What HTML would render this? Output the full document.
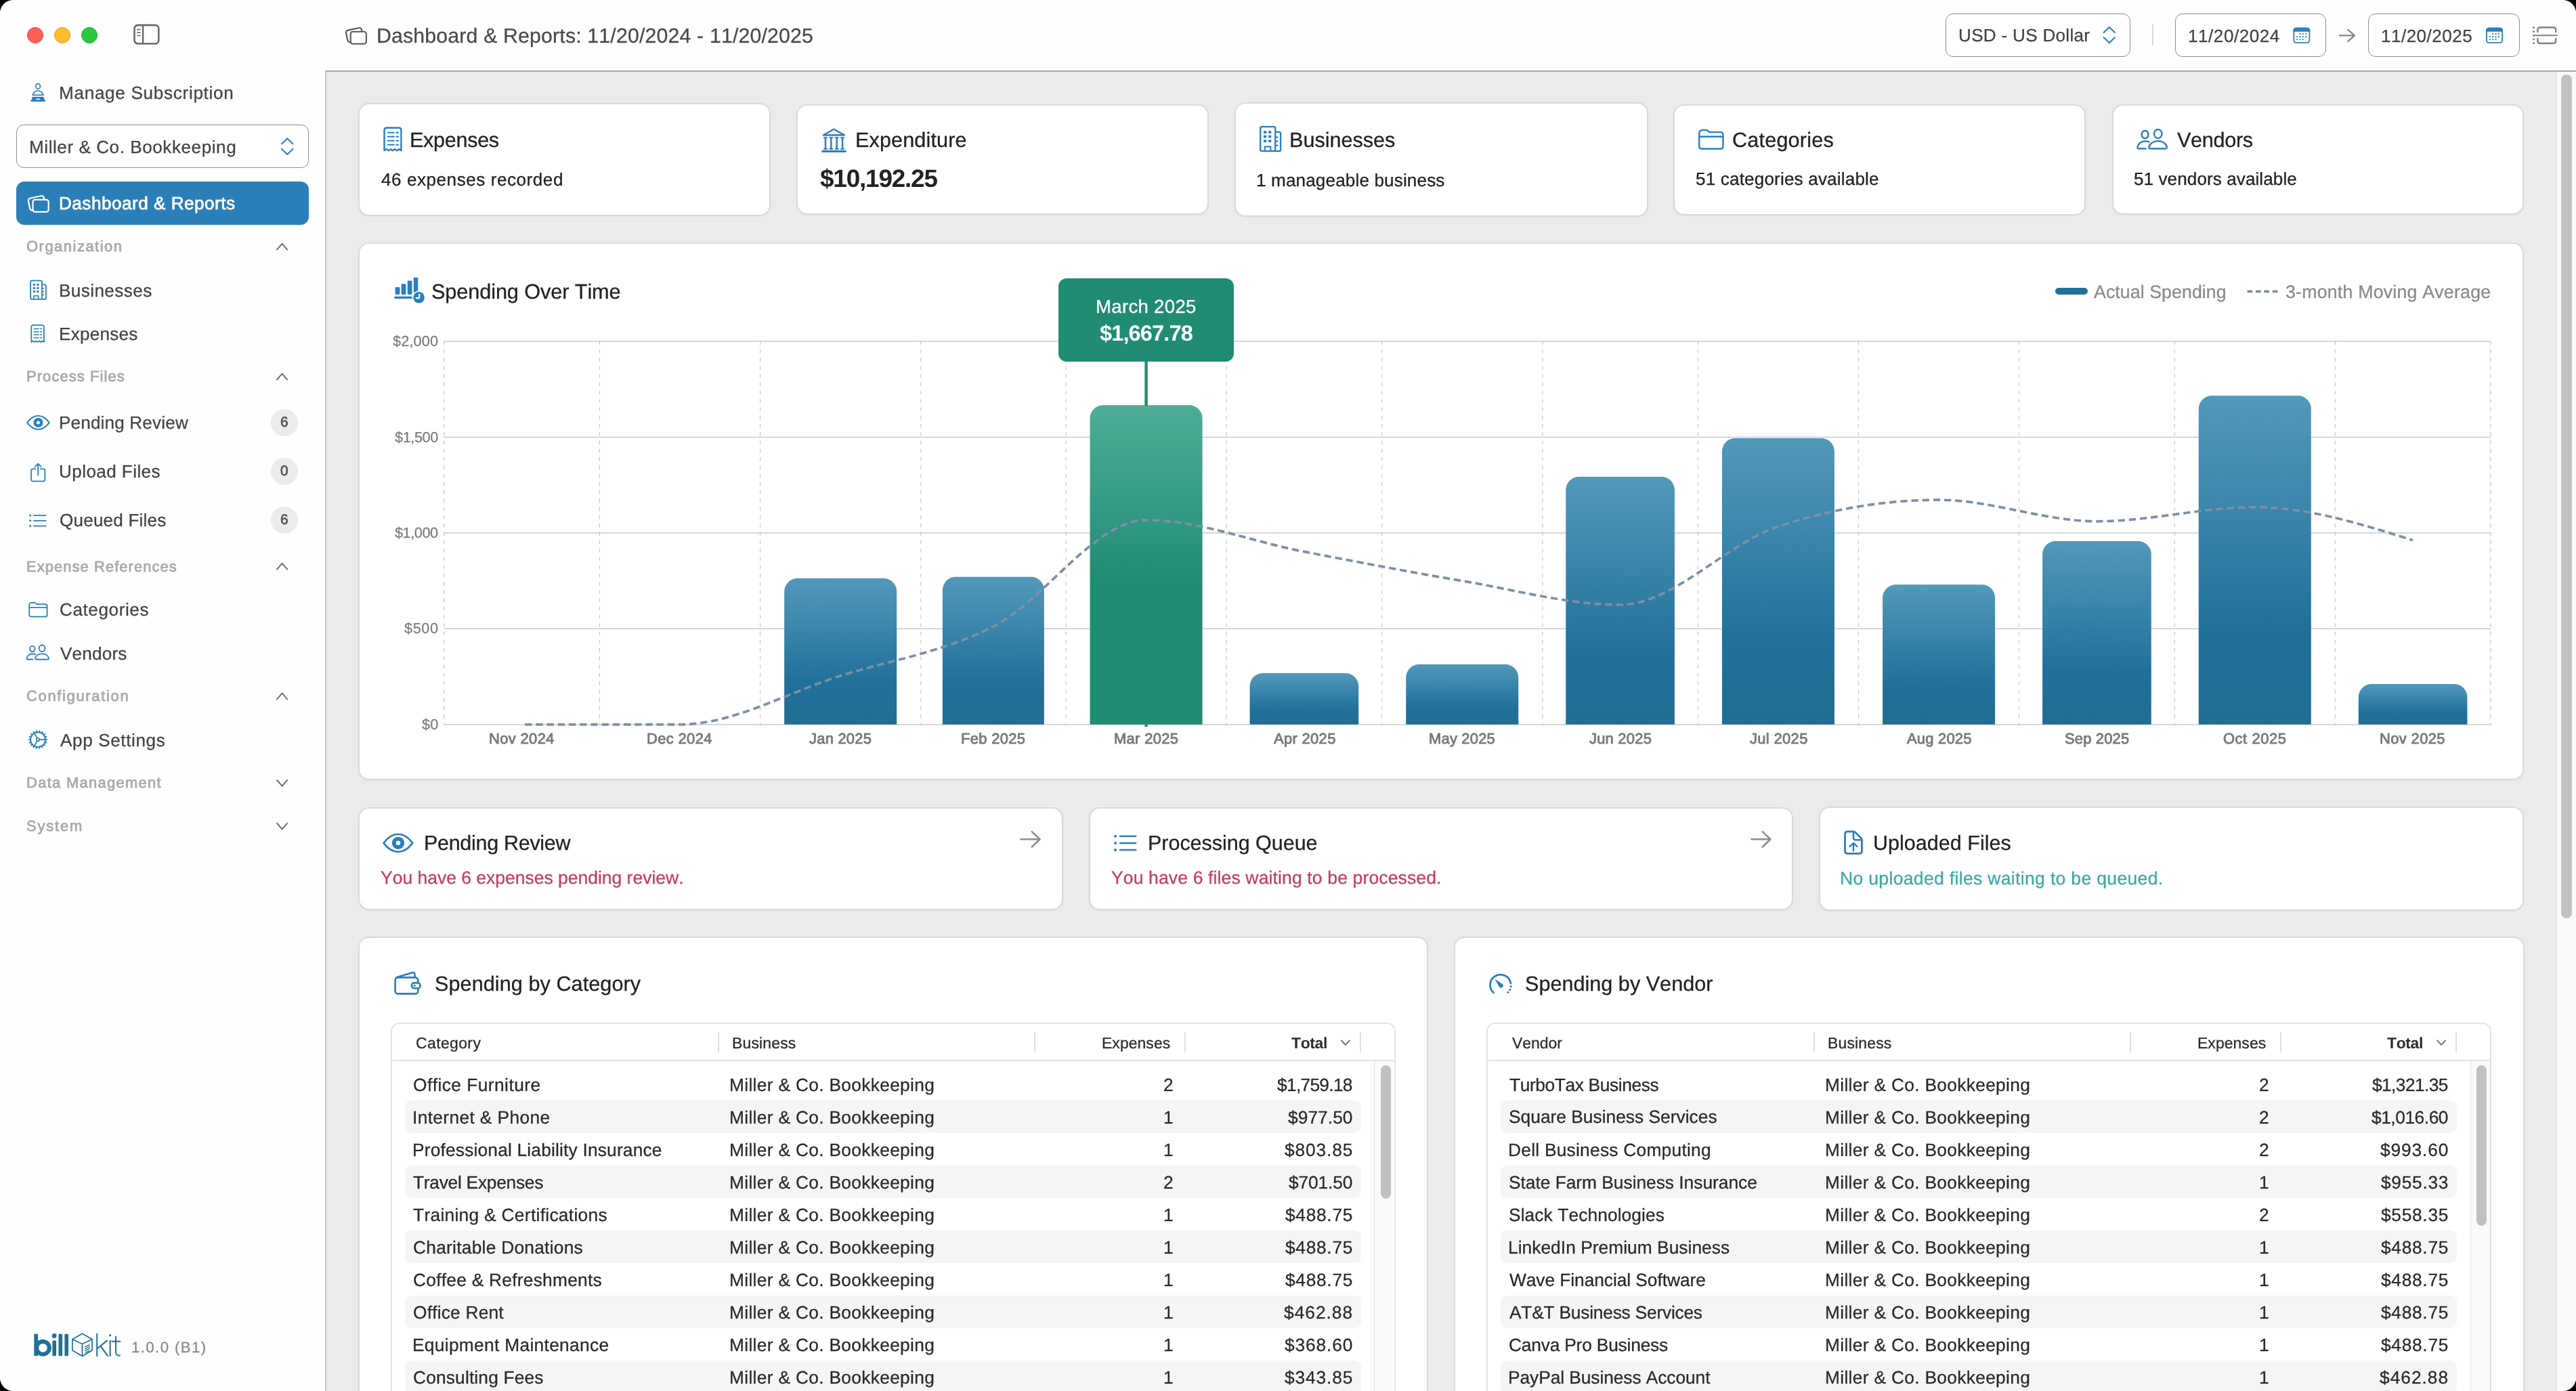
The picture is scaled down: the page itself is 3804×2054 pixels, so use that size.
<!DOCTYPE html>
<html><head><meta charset="utf-8"><title>Dashboard &amp; Reports</title><style>
html,body{margin:0;padding:0;background:#000;}
body{width:3804px;height:2054px;overflow:hidden;position:relative;font-family:"Liberation Sans",sans-serif;}
#win{position:absolute;left:0;top:0;width:3804px;height:2054px;border-radius:20px;overflow:hidden;background:#fefefe;}
.b{position:absolute;}
.t{position:absolute;white-space:nowrap;font-kerning:none;will-change:transform;text-rendering:geometricPrecision;font-family:"Liberation Sans",sans-serif;}
svg.ov{position:absolute;left:0;top:0;}
</style></head><body><div id="win">
<div class="b" style="left:0.00px;top:0.00px;width:480.00px;height:2054.00px;background:#fefefe;"></div>
<div class="b" style="left:480.00px;top:0.00px;width:3324.00px;height:104.00px;background:#fefefe;"></div>
<div class="b" style="left:480.00px;top:104.00px;width:3324.00px;height:1950.00px;background:#ebebeb;border-top:2px solid #a9a9a9;border-left:2px solid #c4c4c4;box-sizing:border-box;"></div>
<div class="b" style="left:3775.00px;top:106.00px;width:29.00px;height:1948.00px;background:#fafafa;border-left:1.5px solid #e6e6e6;box-sizing:border-box;"></div>
<div class="b" style="left:3782.00px;top:110.00px;width:16.00px;height:1246.00px;background:#c1c1c1;border-radius:8px;"></div>
<div class="b" style="left:40.00px;top:40.00px;width:24.00px;height:24.00px;background:#fe5f57;border-radius:50%;border:1px solid #e2463f;box-sizing:border-box;"></div>
<div class="b" style="left:79.80px;top:40.00px;width:24.00px;height:24.00px;background:#febc2e;border-radius:50%;border:1px solid #dfa123;box-sizing:border-box;"></div>
<div class="b" style="left:120.00px;top:40.00px;width:24.00px;height:24.00px;background:#28c840;border-radius:50%;border:1px solid #1dad2b;box-sizing:border-box;"></div>
<div class="t" style="left:555.81px;top:39.35px;font-size:30.30px;line-height:30.30px;color:#4a4a4a;-webkit-text-stroke:0.28px #4a4a4a;letter-spacing:0.152px;">Dashboard &amp; Reports: 11/20/2024 - 11/20/2025</div>
<div class="b" style="left:2872.60px;top:19.60px;width:273.60px;height:64.60px;background:#fff;border:1.8px solid #8f8f8f;border-radius:11px;box-sizing:border-box;"></div>
<div class="t" style="left:2892.18px;top:38.59px;font-size:26.12px;line-height:26.12px;color:#444;-webkit-text-stroke:0.28px #444;letter-spacing:0.285px;">USD - US Dollar</div>
<div class="b" style="left:3178.30px;top:36.30px;width:1.60px;height:31.20px;background:#d8d8d8;"></div>
<div class="b" style="left:3211.50px;top:19.60px;width:223.40px;height:64.60px;background:#fff;border:1.8px solid #8f8f8f;border-radius:11px;box-sizing:border-box;"></div>
<div class="t" style="left:3230.71px;top:39.59px;font-size:26.12px;line-height:26.12px;color:#444;-webkit-text-stroke:0.28px #444;letter-spacing:0.523px;">11/20/2024</div>
<div class="b" style="left:3496.80px;top:19.60px;width:223.90px;height:64.60px;background:#fff;border:1.8px solid #8f8f8f;border-radius:11px;box-sizing:border-box;"></div>
<div class="t" style="left:3516.01px;top:39.59px;font-size:26.12px;line-height:26.12px;color:#444;-webkit-text-stroke:0.28px #444;letter-spacing:0.448px;">11/20/2025</div>
<div class="t" style="left:87.16px;top:124.09px;font-size:26.12px;line-height:26.12px;color:#444;-webkit-text-stroke:0.28px #444;letter-spacing:0.695px;">Manage Subscription</div>
<div class="b" style="left:24.00px;top:184.00px;width:432.20px;height:64.20px;background:#fff;border:1.8px solid #8f8f8f;border-radius:11px;box-sizing:border-box;"></div>
<div class="t" style="left:42.86px;top:204.09px;font-size:26.12px;line-height:26.12px;color:#444;-webkit-text-stroke:0.28px #444;letter-spacing:0.544px;">Miller &amp; Co. Bookkeeping</div>
<div class="b" style="left:24.00px;top:268.30px;width:431.70px;height:63.40px;background:#2a7fb9;border-radius:12px;"></div>
<div class="t" style="left:87.16px;top:286.99px;font-size:26.12px;line-height:26.12px;color:#fff;-webkit-text-stroke:0.75px #fff;letter-spacing:0.498px;">Dashboard &amp; Reports</div>
<div class="t" style="left:39.36px;top:352.62px;font-size:21.95px;line-height:21.95px;color:#a9a9a9;-webkit-text-stroke:0.8px #a9a9a9;letter-spacing:1.513px;">Organization</div>
<div class="t" style="left:87.16px;top:416.39px;font-size:26.12px;line-height:26.12px;color:#444;-webkit-text-stroke:0.28px #444;letter-spacing:0.410px;">Businesses</div>
<div class="t" style="left:87.16px;top:479.99px;font-size:26.12px;line-height:26.12px;color:#444;-webkit-text-stroke:0.28px #444;letter-spacing:0.251px;">Expenses</div>
<div class="t" style="left:38.60px;top:544.62px;font-size:21.95px;line-height:21.95px;color:#a9a9a9;-webkit-text-stroke:0.8px #a9a9a9;letter-spacing:1.083px;">Process Files</div>
<div class="t" style="left:87.16px;top:611.19px;font-size:26.12px;line-height:26.12px;color:#444;-webkit-text-stroke:0.28px #444;letter-spacing:0.160px;">Pending Review</div>
<div class="t" style="left:87.28px;top:682.89px;font-size:26.12px;line-height:26.12px;color:#444;-webkit-text-stroke:0.28px #444;letter-spacing:0.405px;">Upload Files</div>
<div class="t" style="left:88.06px;top:755.39px;font-size:26.12px;line-height:26.12px;color:#444;-webkit-text-stroke:0.28px #444;letter-spacing:0.181px;">Queued Files</div>
<div class="b" style="left:400.00px;top:604.30px;width:40.00px;height:40.00px;background:#ebebeb;border-radius:50%;"></div>
<div class="t" style="left:414.12px;top:613.91px;font-size:20.90px;line-height:20.90px;color:#555;-webkit-text-stroke:0.7px #555;">6</div>
<div class="b" style="left:400.00px;top:675.90px;width:40.00px;height:40.00px;background:#ebebeb;border-radius:50%;"></div>
<div class="t" style="left:414.19px;top:685.51px;font-size:20.90px;line-height:20.90px;color:#555;-webkit-text-stroke:0.7px #555;">0</div>
<div class="b" style="left:400.00px;top:748.10px;width:40.00px;height:40.00px;background:#ebebeb;border-radius:50%;"></div>
<div class="t" style="left:414.12px;top:757.71px;font-size:20.90px;line-height:20.90px;color:#555;-webkit-text-stroke:0.7px #555;">6</div>
<div class="t" style="left:38.60px;top:825.92px;font-size:21.95px;line-height:21.95px;color:#a9a9a9;-webkit-text-stroke:0.8px #a9a9a9;letter-spacing:1.063px;">Expense References</div>
<div class="t" style="left:87.97px;top:887.39px;font-size:26.12px;line-height:26.12px;color:#444;-webkit-text-stroke:0.28px #444;letter-spacing:0.581px;">Categories</div>
<div class="t" style="left:89.19px;top:951.59px;font-size:26.12px;line-height:26.12px;color:#444;-webkit-text-stroke:0.28px #444;letter-spacing:0.176px;">Vendors</div>
<div class="t" style="left:39.29px;top:1017.42px;font-size:21.95px;line-height:21.95px;color:#a9a9a9;-webkit-text-stroke:0.8px #a9a9a9;letter-spacing:1.675px;">Configuration</div>
<div class="t" style="left:89.25px;top:1079.79px;font-size:26.12px;line-height:26.12px;color:#444;-webkit-text-stroke:0.28px #444;letter-spacing:0.614px;">App Settings</div>
<div class="t" style="left:38.60px;top:1144.62px;font-size:21.95px;line-height:21.95px;color:#a9a9a9;-webkit-text-stroke:0.8px #a9a9a9;letter-spacing:1.301px;">Data Management</div>
<div class="t" style="left:39.40px;top:1209.02px;font-size:21.95px;line-height:21.95px;color:#a9a9a9;-webkit-text-stroke:0.8px #a9a9a9;letter-spacing:1.816px;">System</div>
<div class="t" style="left:193.70px;top:1978.56px;font-size:22.26px;line-height:22.26px;color:#8a8a8a;-webkit-text-stroke:0.28px #8a8a8a;letter-spacing:1.382px;">1.0.0 (B1)</div>
<div class="b" style="left:529.30px;top:151.60px;width:608.90px;height:167.20px;background:#fff;border:2px solid #dadada;border-radius:16px;box-sizing:border-box;box-shadow:0 1px 2px rgba(0,0,0,0.04);"></div>
<div class="t" style="left:605.39px;top:192.08px;font-size:30.62px;line-height:30.62px;color:#222;-webkit-text-stroke:0.28px #222;letter-spacing:-0.321px;">Expenses</div>
<div class="t" style="left:562.80px;top:251.59px;font-size:26.12px;line-height:26.12px;color:#222;-webkit-text-stroke:0.28px #222;letter-spacing:0.530px;">46 expenses recorded</div>
<div class="b" style="left:1176.00px;top:153.70px;width:609.30px;height:163.10px;background:#fff;border:2px solid #dadada;border-radius:16px;box-sizing:border-box;box-shadow:0 1px 2px rgba(0,0,0,0.04);"></div>
<div class="t" style="left:1262.69px;top:192.38px;font-size:30.62px;line-height:30.62px;color:#222;-webkit-text-stroke:0.28px #222;letter-spacing:0.116px;">Expenditure</div>
<div class="t" style="left:1210.51px;top:245.97px;font-size:36.89px;line-height:36.89px;color:#222;font-weight:700;letter-spacing:-1.179px;">$10,192.25</div>
<div class="b" style="left:1823.00px;top:150.60px;width:610.50px;height:169.60px;background:#fff;border:2px solid #dadada;border-radius:16px;box-sizing:border-box;box-shadow:0 1px 2px rgba(0,0,0,0.04);"></div>
<div class="t" style="left:1903.69px;top:192.08px;font-size:30.62px;line-height:30.62px;color:#222;-webkit-text-stroke:0.28px #222;letter-spacing:-0.029px;">Businesses</div>
<div class="t" style="left:1855.01px;top:253.09px;font-size:26.12px;line-height:26.12px;color:#222;-webkit-text-stroke:0.28px #222;letter-spacing:0.129px;">1 manageable business</div>
<div class="b" style="left:2471.00px;top:153.70px;width:609.00px;height:164.10px;background:#fff;border:2px solid #dadada;border-radius:16px;box-sizing:border-box;box-shadow:0 1px 2px rgba(0,0,0,0.04);"></div>
<div class="t" style="left:2557.65px;top:192.08px;font-size:30.62px;line-height:30.62px;color:#222;-webkit-text-stroke:0.28px #222;letter-spacing:0.188px;">Categories</div>
<div class="t" style="left:2504.25px;top:251.29px;font-size:26.12px;line-height:26.12px;color:#222;-webkit-text-stroke:0.28px #222;letter-spacing:0.158px;">51 categories available</div>
<div class="b" style="left:3118.50px;top:154.10px;width:608.30px;height:163.40px;background:#fff;border:2px solid #dadada;border-radius:16px;box-sizing:border-box;box-shadow:0 1px 2px rgba(0,0,0,0.04);"></div>
<div class="t" style="left:3214.97px;top:192.08px;font-size:30.62px;line-height:30.62px;color:#222;-webkit-text-stroke:0.28px #222;letter-spacing:-0.317px;">Vendors</div>
<div class="t" style="left:3150.75px;top:251.29px;font-size:26.12px;line-height:26.12px;color:#222;-webkit-text-stroke:0.28px #222;letter-spacing:0.067px;">51 vendors available</div>
<div class="b" style="left:529.40px;top:358.40px;width:3197.40px;height:793.60px;background:#fff;border:2px solid #dadada;border-radius:16px;box-sizing:border-box;box-shadow:0 1px 2px rgba(0,0,0,0.04);"></div>
<div class="t" style="left:636.90px;top:415.59px;font-size:30.72px;line-height:30.72px;color:#222;-webkit-text-stroke:0.28px #222;letter-spacing:-0.123px;">Spending Over Time</div>
<div class="b" style="left:3034.90px;top:425.30px;width:47.80px;height:10.00px;background:#20709a;border-radius:5px;"></div>
<div class="t" style="left:3092.35px;top:418.15px;font-size:26.75px;line-height:26.75px;color:#8a8a8a;-webkit-text-stroke:0.28px #8a8a8a;letter-spacing:0.060px;">Actual Spending</div>
<div class="t" style="left:3374.98px;top:418.15px;font-size:26.75px;line-height:26.75px;color:#8a8a8a;-webkit-text-stroke:0.28px #8a8a8a;letter-spacing:0.201px;">3-month Moving Average</div>
<div class="t" style="left:622.57px;top:1059.00px;font-size:21.74px;line-height:21.74px;color:#7c7c7c;-webkit-text-stroke:0.28px #7c7c7c;letter-spacing:0.105px;">$0</div>
<div class="t" style="left:596.77px;top:917.40px;font-size:21.74px;line-height:21.74px;color:#7c7c7c;-webkit-text-stroke:0.28px #7c7c7c;letter-spacing:0.576px;">$500</div>
<div class="t" style="left:582.77px;top:775.80px;font-size:21.74px;line-height:21.74px;color:#7c7c7c;-webkit-text-stroke:0.28px #7c7c7c;letter-spacing:-0.480px;">$1,000</div>
<div class="t" style="left:582.57px;top:635.20px;font-size:21.74px;line-height:21.74px;color:#7c7c7c;-webkit-text-stroke:0.28px #7c7c7c;letter-spacing:-0.440px;">$1,500</div>
<div class="t" style="left:579.77px;top:492.60px;font-size:21.74px;line-height:21.74px;color:#7c7c7c;-webkit-text-stroke:0.28px #7c7c7c;letter-spacing:0.120px;">$2,000</div>
<div class="t" style="left:721.86px;top:1080.32px;font-size:21.95px;line-height:21.95px;color:#7a7a7a;-webkit-text-stroke:0.9px #7a7a7a;letter-spacing:0.357px;">Nov 2024</div>
<div class="t" style="left:955.20px;top:1080.32px;font-size:21.95px;line-height:21.95px;color:#7a7a7a;-webkit-text-stroke:0.9px #7a7a7a;letter-spacing:0.357px;">Dec 2024</div>
<div class="t" style="left:1195.48px;top:1080.32px;font-size:21.95px;line-height:21.95px;color:#7a7a7a;-webkit-text-stroke:0.9px #7a7a7a;letter-spacing:0.238px;">Jan 2025</div>
<div class="t" style="left:1418.96px;top:1080.32px;font-size:21.95px;line-height:21.95px;color:#7a7a7a;-webkit-text-stroke:0.9px #7a7a7a;letter-spacing:0.313px;">Feb 2025</div>
<div class="t" style="left:1644.66px;top:1080.32px;font-size:21.95px;line-height:21.95px;color:#7a7a7a;-webkit-text-stroke:0.9px #7a7a7a;letter-spacing:0.316px;">Mar 2025</div>
<div class="t" style="left:1880.66px;top:1080.32px;font-size:21.95px;line-height:21.95px;color:#7a7a7a;-webkit-text-stroke:0.9px #7a7a7a;letter-spacing:0.328px;">Apr 2025</div>
<div class="t" style="left:2109.89px;top:1080.32px;font-size:21.95px;line-height:21.95px;color:#7a7a7a;-webkit-text-stroke:0.9px #7a7a7a;letter-spacing:0.207px;">May 2025</div>
<div class="t" style="left:2346.94px;top:1080.32px;font-size:21.95px;line-height:21.95px;color:#7a7a7a;-webkit-text-stroke:0.9px #7a7a7a;letter-spacing:0.224px;">Jun 2025</div>
<div class="t" style="left:2583.54px;top:1080.32px;font-size:21.95px;line-height:21.95px;color:#7a7a7a;-webkit-text-stroke:0.9px #7a7a7a;letter-spacing:0.342px;">Jul 2025</div>
<div class="t" style="left:2815.81px;top:1080.32px;font-size:21.95px;line-height:21.95px;color:#7a7a7a;-webkit-text-stroke:0.9px #7a7a7a;letter-spacing:0.215px;">Aug 2025</div>
<div class="t" style="left:3048.84px;top:1080.32px;font-size:21.95px;line-height:21.95px;color:#7a7a7a;-webkit-text-stroke:0.9px #7a7a7a;letter-spacing:0.165px;">Sep 2025</div>
<div class="t" style="left:3283.30px;top:1080.32px;font-size:21.95px;line-height:21.95px;color:#7a7a7a;-webkit-text-stroke:0.9px #7a7a7a;letter-spacing:0.544px;">Oct 2025</div>
<div class="t" style="left:3514.43px;top:1080.32px;font-size:21.95px;line-height:21.95px;color:#7a7a7a;-webkit-text-stroke:0.9px #7a7a7a;letter-spacing:0.369px;">Nov 2025</div>
<svg class="ov" width="3804" height="2054" viewBox="0 0 3804 2054" xmlns="http://www.w3.org/2000/svg"><g transform="translate(197 36)"><rect x="1.5" y="1.1" width="35.8" height="27.4" rx="5" fill="none" stroke="#6a6a6a" stroke-width="2.6"/><path d="M14.1 1.2 V28.4" stroke="#6a6a6a" stroke-width="2.4"/><path d="M5.9 7.6 H9.9 M5.9 12.1 H9.9 M5.9 16.5 H9.9" stroke="#6a6a6a" stroke-width="1.7" stroke-linecap="round"/></g><g transform="translate(509.60 39.40) scale(1.0000)" fill="none" stroke="#555" stroke-linecap="round" stroke-linejoin="round" ><rect x="2.40" y="3.30" width="23.4" height="18.2" rx="3.4" stroke-width="2.1" transform="rotate(-12 14.1 12.4)"/><rect x="8.1" y="7.4" width="23.2" height="18" rx="3.4" stroke-width="2.1" fill="#fefefe"/></g><path d="M3106.6000000000004 48 L3114.8 40 L3123.0 48 M3106.6000000000004 55.3 L3114.8 63.3 L3123.0 55.3" fill="none" stroke="#2a7fbd" stroke-width="2.1" stroke-linecap="round" stroke-linejoin="round"/><g transform="translate(3386.4 40.7)"><rect x="0.9" y="0.9" width="23.1" height="21.5" rx="3.6" fill="#fff" stroke="#2a7fbd" stroke-width="1.8"/><path d="M0.9 5.4 V4.5 Q0.9 0.9 4.5 0.9 H20.4 Q24 0.9 24 4.5 V5.4 Q21.9 5.2 19.8 5.2 H5.1 Q3 5.2 0.9 5.4 Z" fill="#2a7fbd" stroke="#2a7fbd" stroke-width="1.8" stroke-linejoin="round"/><rect x="9.10" y="8.30" width="2" height="2" rx="0.4" fill="#2a7fbd"/><rect x="13.40" y="8.30" width="2" height="2" rx="0.4" fill="#2a7fbd"/><rect x="17.70" y="8.30" width="2" height="2" rx="0.4" fill="#2a7fbd"/><rect x="4.80" y="12.45" width="2" height="2" rx="0.4" fill="#2a7fbd"/><rect x="9.10" y="12.45" width="2" height="2" rx="0.4" fill="#2a7fbd"/><rect x="13.40" y="12.45" width="2" height="2" rx="0.4" fill="#2a7fbd"/><rect x="17.70" y="12.45" width="2" height="2" rx="0.4" fill="#2a7fbd"/><rect x="4.80" y="16.60" width="2" height="2" rx="0.4" fill="#2a7fbd"/><rect x="9.10" y="16.60" width="2" height="2" rx="0.4" fill="#2a7fbd"/><rect x="13.40" y="16.60" width="2" height="2" rx="0.4" fill="#2a7fbd"/></g><path d="M3455 52.4 H3477 M3467.2 43.7 L3477 52.4 L3467.2 61.099999999999994" fill="none" stroke="#858585" stroke-width="2.2" stroke-linecap="round" stroke-linejoin="round"/><g transform="translate(3671.1 40.7)"><rect x="0.9" y="0.9" width="23.1" height="21.5" rx="3.6" fill="#fff" stroke="#2a7fbd" stroke-width="1.8"/><path d="M0.9 5.4 V4.5 Q0.9 0.9 4.5 0.9 H20.4 Q24 0.9 24 4.5 V5.4 Q21.9 5.2 19.8 5.2 H5.1 Q3 5.2 0.9 5.4 Z" fill="#2a7fbd" stroke="#2a7fbd" stroke-width="1.8" stroke-linejoin="round"/><rect x="9.10" y="8.30" width="2" height="2" rx="0.4" fill="#2a7fbd"/><rect x="13.40" y="8.30" width="2" height="2" rx="0.4" fill="#2a7fbd"/><rect x="17.70" y="8.30" width="2" height="2" rx="0.4" fill="#2a7fbd"/><rect x="4.80" y="12.45" width="2" height="2" rx="0.4" fill="#2a7fbd"/><rect x="9.10" y="12.45" width="2" height="2" rx="0.4" fill="#2a7fbd"/><rect x="13.40" y="12.45" width="2" height="2" rx="0.4" fill="#2a7fbd"/><rect x="17.70" y="12.45" width="2" height="2" rx="0.4" fill="#2a7fbd"/><rect x="4.80" y="16.60" width="2" height="2" rx="0.4" fill="#2a7fbd"/><rect x="9.10" y="16.60" width="2" height="2" rx="0.4" fill="#2a7fbd"/><rect x="13.40" y="16.60" width="2" height="2" rx="0.4" fill="#2a7fbd"/></g><g transform="translate(3740 39)"><circle cx="1.6" cy="1.6" r="1.5" fill="#808080"/><circle cx="1.6" cy="7.4" r="1.5" fill="#808080"/><circle cx="1.6" cy="13.2" r="1.5" fill="#808080"/><circle cx="1.6" cy="19" r="1.5" fill="#808080"/><circle cx="1.6" cy="24.8" r="1.5" fill="#808080"/><path d="M7.4 9 V5 Q7.4 1.5 10.9 1.5 H30.7 Q34.2 1.5 34.2 5 V9 M7.4 17 V21.5 Q7.4 25 10.9 25 H30.7 Q34.2 25 34.2 21.5 V17" fill="none" stroke="#808080" stroke-width="2.3" stroke-linecap="butt"/><path d="M1.6 13.2 H35.8" stroke="#808080" stroke-width="2" stroke-linecap="round"/></g><g transform="translate(45.10 123.00) scale(1.0000)" fill="none" stroke="#2a7fbd" stroke-linecap="round" stroke-linejoin="round" ><ellipse cx="11" cy="4.4" rx="3.3" ry="3.7" stroke-width="1.7"/><path d="M3.3 17.3 Q3.3 15.8 4.2 14.7 Q6.8 11 11 11 Q15.2 11 17.8 14.7 Q18.7 15.8 18.7 17.3 Z" stroke-width="1.7"/><path d="M2 24.6 V21.6 Q2 19.9 3.7 19.9 H18.3 Q20 19.9 20 21.6 V24.6 H21.2 Q21.9 24.6 21.9 25.3 V26.3 Q21.9 27 21.2 27 H0.7 Q0 27 0 26.3 V25.3 Q0 24.6 0.7 24.6 Z" fill="#2a7fbd" stroke="none"/><rect x="7.9" y="22.8" width="6.3" height="1.5" rx="0.5" fill="#fff" stroke="none"/></g><path d="M416.0 212.6 L424.2 204.6 L432.4 212.6 M416.0 219.9 L424.2 227.9 L432.4 219.9" fill="none" stroke="#2a7fbd" stroke-width="2.1" stroke-linecap="round" stroke-linejoin="round"/><g transform="translate(40.40 287.50) scale(1.0000)" fill="none" stroke="#fff" stroke-linecap="round" stroke-linejoin="round" ><rect x="2.40" y="3.30" width="23.4" height="18.2" rx="3.4" stroke-width="2.2" transform="rotate(-12 14.1 12.4)"/><rect x="8.1" y="7.4" width="23.2" height="18" rx="3.4" stroke-width="2.2" fill="#2a7fb9"/></g><path d="M409.0 368.59999999999997 L416.6 359.8 L424.20000000000005 368.59999999999997" fill="none" stroke="#6a6a6a" stroke-width="1.9" stroke-linecap="round" stroke-linejoin="round"/><g transform="translate(44.20 413.40) scale(1.0000)" fill="none" stroke="#2a7fbd" stroke-linecap="round" stroke-linejoin="round" ><rect x="0.9" y="0.9" width="16.8" height="27.5" rx="1.6" stroke-width="1.8"/><path d="M17.7 6.9 H22 Q23.7 6.9 23.7 8.6 V26.7 Q23.7 28.4 22 28.4 H17.7" stroke-width="1.8"/><rect x="4.6" y="5.6" width="3.2" height="2.9" fill="#2a7fbd" stroke="none"/><rect x="4.6" y="10.6" width="3.2" height="2.9" fill="#2a7fbd" stroke="none"/><rect x="4.6" y="15.6" width="3.2" height="2.9" fill="#2a7fbd" stroke="none"/><rect x="10.0" y="5.6" width="3.2" height="2.9" fill="#2a7fbd" stroke="none"/><rect x="10.0" y="10.6" width="3.2" height="2.9" fill="#2a7fbd" stroke="none"/><rect x="10.0" y="15.6" width="3.2" height="2.9" fill="#2a7fbd" stroke="none"/><path d="M5.9 28.4 V23.4 H12.5 V28.4" stroke-width="1.6"/><rect x="18.6" y="11.8" width="2.2" height="1.8" fill="#2a7fbd" stroke="none"/><rect x="18.6" y="16.5" width="2.2" height="1.8" fill="#2a7fbd" stroke="none"/><rect x="18.6" y="21.1" width="2.2" height="1.8" fill="#2a7fbd" stroke="none"/></g><g transform="translate(45.40 479.20) scale(1.0000)" fill="none" stroke="#2a7fbd" stroke-linecap="round" stroke-linejoin="round" ><path d="M0.9 25.9 L0.9 3.4 Q0.9 0.9 3.4 0.9 L17 0.9 Q19.5 0.9 19.5 3.4 L19.5 25.9 l-2.325 -1.5 l-2.325 1.5 l-2.325 -1.5 l-2.325 1.5 l-2.325 -1.5 l-2.325 1.5 l-2.325 -1.5 l-2.325 1.5 Z" stroke-width="1.8"/><path d="M4.8 6.2 H11.6 M14.1 6.2 H16.2" stroke-width="1.5"/><path d="M4.8 10.7 H11.6 M14.1 10.7 H16.2" stroke-width="1.5"/><path d="M4.8 15.1 H11.6 M14.1 15.1 H16.2" stroke-width="1.5"/><path d="M4.8 19.6 H11.6 M14.1 19.6 H16.2" stroke-width="1.5"/></g><path d="M409.0 560.6 L416.6 551.8000000000001 L424.20000000000005 560.6" fill="none" stroke="#6a6a6a" stroke-width="1.9" stroke-linecap="round" stroke-linejoin="round"/><g transform="translate(39.10 613.10) scale(1.0000)" fill="none" stroke="#2a7fbd" stroke-linecap="round" stroke-linejoin="round" ><path d="M1 10.95 Q8.5 1 17.35 1 Q26.2 1 33.7 10.95 Q26.2 20.9 17.35 20.9 Q8.5 20.9 1 10.95 Z" stroke-width="2"/><circle cx="17.35" cy="10.95" r="7" fill="#2a7fbd" stroke="none"/><circle cx="17.35" cy="10.95" r="2.5" fill="#fefefe" stroke="none"/></g><g transform="translate(45.10 683.70) scale(1.0000)" fill="none" stroke="#2a7fbd" stroke-linecap="round" stroke-linejoin="round" ><path d="M7.4 8.7 H3.5 Q1 8.7 1 11.2 V24.4 Q1 26.9 3.5 26.9 H18.7 Q21.2 26.9 21.2 24.4 V11.2 Q21.2 8.7 18.7 8.7 H14.8" stroke-width="1.8"/><path d="M11.1 1.2 V18.1 M6.6 5.5 L11.1 1 L15.6 5.5" stroke-width="1.8"/></g><g transform="translate(43.30 759.80) scale(1.0000)" fill="none" stroke="#2a7fbd" stroke-linecap="round" stroke-linejoin="round" ><circle cx="1.3" cy="1.3" r="1.55" fill="#2a7fbd" stroke="none"/><path d="M6.6 1.3 H24.3" stroke-width="1.9"/><circle cx="1.3" cy="9.05" r="1.55" fill="#2a7fbd" stroke="none"/><path d="M6.6 9.05 H24.3" stroke-width="1.9"/><circle cx="1.3" cy="16.8" r="1.55" fill="#2a7fbd" stroke="none"/><path d="M6.6 16.8 H24.3" stroke-width="1.9"/></g><path d="M409.0 840.6999999999999 L416.6 831.9 L424.20000000000005 840.6999999999999" fill="none" stroke="#6a6a6a" stroke-width="1.9" stroke-linecap="round" stroke-linejoin="round"/><g transform="translate(42.20 888.90) scale(1.0000)" fill="none" stroke="#2a7fbd" stroke-linecap="round" stroke-linejoin="round" ><path d="M1 4.6 Q1 1 4.6 1 H8.4 Q9.9 1 10.9 2.1 L12 3.3 H24.4 Q27.4 3.3 27.4 6.3 V18.8 Q27.4 21.8 24.4 21.8 H4 Q1 21.8 1 18.8 Z M1 8.3 H27.4" stroke-width="1.8"/></g><g transform="translate(38.10 951.80) scale(1.0000)" fill="none" stroke="#2a7fbd" stroke-linecap="round" stroke-linejoin="round" ><ellipse cx="9.66" cy="6.3" rx="3.75" ry="4.2" stroke-width="1.8"/><path d="M11.1 21.95 H2.7 Q1.15 21.95 1.3 20.5 C1.9 16.5 5.2 13.7 9.66 13.7 Q12.5 13.7 14.7 14.75" stroke-width="1.8" stroke-linecap="butt"/><ellipse cx="23.97" cy="5.55" rx="4.35" ry="4.87" stroke-width="1.8"/><path d="M15.5 21.95 Q13.85 21.95 14.0 20.5 C14.7 16.4 18.5 13.56 23.93 13.56 C29.4 13.56 33.2 16.4 33.86 20.5 Q34 21.95 32.4 21.95 Z" stroke-width="1.8"/></g><path d="M409.0 1032.5 L416.6 1023.6999999999999 L424.20000000000005 1032.5" fill="none" stroke="#6a6a6a" stroke-width="1.9" stroke-linecap="round" stroke-linejoin="round"/><g transform="translate(42.20 1078.30) scale(1.0000)" fill="none" stroke="#2a7fbd" stroke-linecap="round" stroke-linejoin="round" ><circle cx="13.85" cy="13.85" r="10.9" stroke-width="1.8"/><path d="M25.18 12.62 L27.75 13.52 L27.75 14.18 L25.18 15.08 Z M24.92 16.57 L27.02 18.29 L26.79 18.91 L24.08 18.88 Z M23.32 20.19 L24.71 22.53 L24.28 23.04 L21.74 22.08 Z M20.58 23.05 L21.08 25.72 L20.51 26.05 L18.45 24.28 Z M17.03 24.80 L16.59 27.48 L15.94 27.59 L14.61 25.22 Z M13.09 25.22 L11.76 27.59 L11.11 27.48 L10.67 24.80 Z M9.25 24.28 L7.19 26.05 L6.62 25.72 L7.12 23.05 Z M5.96 22.08 L3.42 23.04 L2.99 22.53 L4.38 20.19 Z M3.62 18.88 L0.91 18.91 L0.68 18.29 L2.78 16.57 Z M2.52 15.08 L-0.05 14.18 L-0.05 13.52 L2.52 12.62 Z M2.78 11.13 L0.68 9.41 L0.91 8.79 L3.62 8.82 Z M4.38 7.51 L2.99 5.17 L3.42 4.66 L5.96 5.62 Z M7.12 4.65 L6.62 1.98 L7.19 1.65 L9.25 3.42 Z M10.67 2.90 L11.11 0.22 L11.76 0.11 L13.09 2.48 Z M14.61 2.48 L15.94 0.11 L16.59 0.22 L17.03 2.90 Z M18.45 3.42 L20.51 1.65 L21.08 1.98 L20.58 4.65 Z M21.74 5.62 L24.28 4.66 L24.71 5.17 L23.32 7.51 Z M24.08 8.82 L26.79 8.79 L27.02 9.41 L24.92 11.13 Z " fill="#2a7fbd" stroke="#2a7fbd" stroke-width="0.5"/><circle cx="13.85" cy="13.85" r="2.25" stroke-width="1.7"/><path d="M16.45 13.85 L24.25 13.85" stroke-width="1.8" stroke-linecap="butt"/><path d="M12.55 16.10 L8.65 22.86" stroke-width="1.8" stroke-linecap="butt"/><path d="M12.55 11.60 L8.65 4.84" stroke-width="1.8" stroke-linecap="butt"/></g><path d="M409.0 1151.8999999999999 L416.6 1160.7 L424.20000000000005 1151.8999999999999" fill="none" stroke="#6a6a6a" stroke-width="1.9" stroke-linecap="round" stroke-linejoin="round"/><path d="M409.0 1215.6 L416.6 1224.4 L424.20000000000005 1215.6" fill="none" stroke="#6a6a6a" stroke-width="1.9" stroke-linecap="round" stroke-linejoin="round"/><g fill="#1f7197" stroke="none"><rect x="50.3" y="1969.7" width="5.9" height="32.6" rx="1.2"/><circle cx="63.4" cy="1990.3" r="9.4" fill="none" stroke="#1f7197" stroke-width="6.1"/><rect x="77.4" y="1979.5" width="5.6" height="22.8" rx="1.2"/><circle cx="80.2" cy="1972.5" r="3.4"/><rect x="86.5" y="1969.7" width="5.6" height="32.6" rx="1.2"/><rect x="95.4" y="1969.7" width="5.6" height="32.6" rx="1.2"/></g><g fill="none" stroke="#1f7197" stroke-width="1.7" stroke-linejoin="round" stroke-linecap="round"><path d="M121.5 1969.3 L136.1 1977.7 V1994.1 L121.5 2002.6 L106.9 1994.1 V1977.7 Z M106.9 1977.7 L121.5 1984.6 L136.1 1977.7 M121.5 1984.6 V2002.6"/><path d="M125.6 1988.6 L131.8 1985.8 M125.6 1991.6 L132.6 1988.4 M125.6 1994.6 L132.6 1991.4 M126.6 1997.2 L131.8 1994.8" stroke-width="1.4"/><path d="M143.2 1969.8 V2002.2 M144 1991 L158 1979.6 M148.5 1987.6 L159 2002.2" stroke-width="2"/><path d="M162.6 1979.8 V2002.2" stroke-width="2"/><path d="M171 1973.6 V1996.5 Q171 2002 177 2001.6 M165.2 1980.8 H177.5" stroke-width="2"/></g><circle cx="162.6" cy="1971.8" r="1.6" fill="#1f7197"/><g transform="translate(566.30 187.50) scale(1.3400)" fill="none" stroke="#2a7fbd" stroke-linecap="round" stroke-linejoin="round" ><path d="M0.9 25.9 L0.9 3.4 Q0.9 0.9 3.4 0.9 L17 0.9 Q19.5 0.9 19.5 3.4 L19.5 25.9 l-2.325 -1.5 l-2.325 1.5 l-2.325 -1.5 l-2.325 1.5 l-2.325 -1.5 l-2.325 1.5 l-2.325 -1.5 l-2.325 1.5 Z" stroke-width="1.8"/><path d="M4.8 6.2 H11.6 M14.1 6.2 H16.2" stroke-width="1.5"/><path d="M4.8 10.7 H11.6 M14.1 10.7 H16.2" stroke-width="1.5"/><path d="M4.8 15.1 H11.6 M14.1 15.1 H16.2" stroke-width="1.5"/><path d="M4.8 19.6 H11.6 M14.1 19.6 H16.2" stroke-width="1.5"/></g><g transform="translate(1213.00 189.00) scale(1.0000)" fill="none" stroke="#2a7fbd" stroke-linecap="round" stroke-linejoin="round" ><path d="M2.8 10.5 L18.4 1.7 L34 10.5 Z" stroke-width="2.3"/><path d="M3.9 14.3 H8.1 M3.9 30.9 H8.1" stroke-width="2"/><path d="M6.0 14.3 V30.9" stroke-width="2.5" stroke-linecap="butt"/><path d="M12.200000000000001 14.3 H16.400000000000002 M12.200000000000001 30.9 H16.400000000000002" stroke-width="2"/><path d="M14.3 14.3 V30.9" stroke-width="2.5" stroke-linecap="butt"/><path d="M20.599999999999998 14.3 H24.8 M20.599999999999998 30.9 H24.8" stroke-width="2"/><path d="M22.7 14.3 V30.9" stroke-width="2.5" stroke-linecap="butt"/><path d="M29.0 14.3 H33.2 M29.0 30.9 H33.2" stroke-width="2"/><path d="M31.1 14.3 V30.9" stroke-width="2.5" stroke-linecap="butt"/><path d="M1.6 34.6 H35.4" stroke-width="3"/></g><g transform="translate(1860.00 185.90) scale(1.3100)" fill="none" stroke="#2a7fbd" stroke-linecap="round" stroke-linejoin="round" ><rect x="0.9" y="0.9" width="16.8" height="27.5" rx="1.6" stroke-width="1.8"/><path d="M17.7 6.9 H22 Q23.7 6.9 23.7 8.6 V26.7 Q23.7 28.4 22 28.4 H17.7" stroke-width="1.8"/><rect x="4.6" y="5.6" width="3.2" height="2.9" fill="#2a7fbd" stroke="none"/><rect x="4.6" y="10.6" width="3.2" height="2.9" fill="#2a7fbd" stroke="none"/><rect x="4.6" y="15.6" width="3.2" height="2.9" fill="#2a7fbd" stroke="none"/><rect x="10.0" y="5.6" width="3.2" height="2.9" fill="#2a7fbd" stroke="none"/><rect x="10.0" y="10.6" width="3.2" height="2.9" fill="#2a7fbd" stroke="none"/><rect x="10.0" y="15.6" width="3.2" height="2.9" fill="#2a7fbd" stroke="none"/><path d="M5.9 28.4 V23.4 H12.5 V28.4" stroke-width="1.6"/><rect x="18.6" y="11.8" width="2.2" height="1.8" fill="#2a7fbd" stroke="none"/><rect x="18.6" y="16.5" width="2.2" height="1.8" fill="#2a7fbd" stroke="none"/><rect x="18.6" y="21.1" width="2.2" height="1.8" fill="#2a7fbd" stroke="none"/></g><g transform="translate(2507.90 190.70) scale(1.3350)" fill="none" stroke="#2a7fbd" stroke-linecap="round" stroke-linejoin="round" ><path d="M1 4.6 Q1 1 4.6 1 H8.4 Q9.9 1 10.9 2.1 L12 3.3 H24.4 Q27.4 3.3 27.4 6.3 V18.8 Q27.4 21.8 24.4 21.8 H4 Q1 21.8 1 18.8 Z M1 8.3 H27.4" stroke-width="1.8"/></g><g transform="translate(3154.70 190.20) scale(1.3350)" fill="none" stroke="#2a7fbd" stroke-linecap="round" stroke-linejoin="round" ><ellipse cx="9.66" cy="6.3" rx="3.75" ry="4.2" stroke-width="1.8"/><path d="M11.1 21.95 H2.7 Q1.15 21.95 1.3 20.5 C1.9 16.5 5.2 13.7 9.66 13.7 Q12.5 13.7 14.7 14.75" stroke-width="1.8" stroke-linecap="butt"/><ellipse cx="23.97" cy="5.55" rx="4.35" ry="4.87" stroke-width="1.8"/><path d="M15.5 21.95 Q13.85 21.95 14.0 20.5 C14.7 16.4 18.5 13.56 23.93 13.56 C29.4 13.56 33.2 16.4 33.86 20.5 Q34 21.95 32.4 21.95 Z" stroke-width="1.8"/></g><g transform="translate(0 0)"><rect x="583.6" y="423.9" width="6.80" height="11.10" rx="1.4" fill="#2a7fbd" stroke="none"/><rect x="592.6" y="419.2" width="6.80" height="15.80" rx="1.4" fill="#2a7fbd" stroke="none"/><rect x="601.7" y="414.6" width="6.80" height="20.40" rx="1.4" fill="#2a7fbd" stroke="none"/><rect x="610.8" y="409.8" width="6.50" height="25.20" rx="1.4" fill="#2a7fbd" stroke="none"/><rect x="582.1" y="437.8" width="27" height="3.1" rx="1.5" fill="#2a7fbd" stroke="none"/><circle cx="618.6" cy="439.3" r="10" fill="#fff" stroke="none"/><circle cx="618.6" cy="439.3" r="8.3" fill="#2a7fbd" stroke="none"/><path d="M619.2 434.6 V440.1 H614.6" stroke="#fff" stroke-width="2.1" stroke-linecap="round" stroke-linejoin="round" fill="none"/></g><path d="M3318.5 430.3 H3365" stroke="#7d8fa5" stroke-width="3.8" stroke-dasharray="7.8 4.6" fill="none"/><g fill="none"><path d="M655.4 1070.00 H3678.39" stroke="#d8d8d8" stroke-width="2.2"/><path d="M655.4 928.50 H3678.39" stroke="#b6b6b6" stroke-width="1.1"/><path d="M655.4 787.00 H3678.39" stroke="#d8d8d8" stroke-width="2.2"/><path d="M655.4 645.50 H3678.39" stroke="#b6b6b6" stroke-width="1.1"/><path d="M655.4 504.00 H3678.39" stroke="#d8d8d8" stroke-width="2.2"/><path d="M655.90 503.40 V1071.30" stroke="#dadada" stroke-width="2" stroke-dasharray="5.8 6.46"/><path d="M885.42 503.40 V1071.30" stroke="#c4c4c4" stroke-width="1.1" stroke-dasharray="5.8 6.46"/><path d="M1122.59 503.40 V1071.30" stroke="#c4c4c4" stroke-width="1.1" stroke-dasharray="5.8 6.46"/><path d="M1359.76 503.40 V1071.30" stroke="#c4c4c4" stroke-width="1.1" stroke-dasharray="5.8 6.46"/><path d="M1573.97 503.40 V1071.30" stroke="#c4c4c4" stroke-width="1.1" stroke-dasharray="5.8 6.46"/><path d="M1811.14 503.40 V1071.30" stroke="#c4c4c4" stroke-width="1.1" stroke-dasharray="5.8 6.46"/><path d="M2040.66 503.40 V1071.30" stroke="#c4c4c4" stroke-width="1.1" stroke-dasharray="5.8 6.46"/><path d="M2277.83 503.40 V1071.30" stroke="#c4c4c4" stroke-width="1.1" stroke-dasharray="5.8 6.46"/><path d="M2507.35 503.40 V1071.30" stroke="#c4c4c4" stroke-width="1.1" stroke-dasharray="5.8 6.46"/><path d="M2744.51 503.40 V1071.30" stroke="#c4c4c4" stroke-width="1.1" stroke-dasharray="5.8 6.46"/><path d="M2981.68 503.40 V1071.30" stroke="#c4c4c4" stroke-width="1.1" stroke-dasharray="5.8 6.46"/><path d="M3211.20 503.40 V1071.30" stroke="#c4c4c4" stroke-width="1.1" stroke-dasharray="5.8 6.46"/><path d="M3448.37 503.40 V1071.30" stroke="#c4c4c4" stroke-width="1.1" stroke-dasharray="5.8 6.46"/><path d="M3677.89 503.40 V1071.30" stroke="#dadada" stroke-width="2" stroke-dasharray="5.8 6.46"/><defs><linearGradient id="gb" x1="0" y1="0" x2="0" y2="1"><stop offset="0" stop-color="#5299ba"/><stop offset="0.72" stop-color="#20709a"/><stop offset="1" stop-color="#206e92"/></linearGradient><linearGradient id="gg" x1="0" y1="0" x2="0" y2="1"><stop offset="0" stop-color="#4fad98"/><stop offset="0.55" stop-color="#218c74"/><stop offset="1" stop-color="#218c74"/></linearGradient></defs><path d="M1158.16 1069.80 V873.50 A19.5 19.5 0 0 1 1177.66 854.00 H1304.68 A19.5 19.5 0 0 1 1324.18 873.50 V1069.80 Z" fill="url(#gb)"/><path d="M1391.89 1069.80 V871.20 A19.5 19.5 0 0 1 1411.39 851.70 H1522.34 A19.5 19.5 0 0 1 1541.84 871.20 V1069.80 Z" fill="url(#gb)"/><path d="M1609.55 1069.80 V617.80 A19.5 19.5 0 0 1 1629.05 598.30 H1756.07 A19.5 19.5 0 0 1 1775.57 617.80 V1069.80 Z" fill="url(#gg)"/><path d="M1845.57 1069.80 V1013.40 A19.5 19.5 0 0 1 1865.07 993.90 H1986.73 A19.5 19.5 0 0 1 2006.23 1013.40 V1069.80 Z" fill="url(#gb)"/><path d="M2076.23 1069.80 V1000.50 A19.5 19.5 0 0 1 2095.73 981.00 H2222.75 A19.5 19.5 0 0 1 2242.25 1000.50 V1069.80 Z" fill="url(#gb)"/><path d="M2312.25 1069.80 V723.60 A19.5 19.5 0 0 1 2331.75 704.10 H2453.42 A19.5 19.5 0 0 1 2472.92 723.60 V1069.80 Z" fill="url(#gb)"/><path d="M2542.92 1069.80 V666.60 A19.5 19.5 0 0 1 2562.42 647.10 H2689.44 A19.5 19.5 0 0 1 2708.94 666.60 V1069.80 Z" fill="url(#gb)"/><path d="M2780.09 1069.80 V882.80 A19.5 19.5 0 0 1 2799.59 863.30 H2926.61 A19.5 19.5 0 0 1 2946.11 882.80 V1069.80 Z" fill="url(#gb)"/><path d="M3016.11 1069.80 V818.50 A19.5 19.5 0 0 1 3035.61 799.00 H3157.27 A19.5 19.5 0 0 1 3176.77 818.50 V1069.80 Z" fill="url(#gb)"/><path d="M3246.78 1069.80 V603.80 A19.5 19.5 0 0 1 3266.28 584.30 H3393.29 A19.5 19.5 0 0 1 3412.79 603.80 V1069.80 Z" fill="url(#gb)"/><path d="M3482.80 1069.80 V1029.50 A19.5 19.5 0 0 1 3502.30 1010.00 H3623.96 A19.5 19.5 0 0 1 3643.46 1029.50 V1069.80 Z" fill="url(#gb)"/><path d="M770.66 1069.80 C848.44 1069.80 926.22 1069.80 1004.00 1069.80 C1083.06 1069.80 1162.11 1022.61 1241.17 997.87 C1316.40 974.32 1391.63 963.48 1466.86 925.17 C1542.09 886.86 1617.33 768.00 1692.56 768.00 C1770.34 768.00 1848.12 799.68 1925.90 814.63 C2003.68 829.59 2081.46 844.67 2159.24 857.73 C2237.02 870.79 2314.81 893.00 2392.59 893.00 C2470.37 893.00 2548.15 803.13 2625.93 777.40 C2704.99 751.24 2784.04 738.17 2863.10 738.17 C2940.88 738.17 3018.66 769.80 3096.44 769.80 C3174.22 769.80 3252.00 748.87 3329.78 748.87 C3407.57 748.87 3485.35 773.32 3563.13 797.77" fill="none" stroke="#7d8fa5" stroke-width="3.7" stroke-dasharray="10.3 5.9" stroke-dashoffset="-4.5"/><path d="M1692.56 533 V599.30 M1692.56 1069.80 V1073.30" stroke="#218c74" stroke-width="4.4"/></g></svg>
<div class="b" style="left:1563.10px;top:411.00px;width:258.90px;height:122.80px;background:#218c74;border-radius:12px;"></div>
<div class="t" style="left:1617.64px;top:439.25px;font-size:27.59px;line-height:27.59px;color:#fff;-webkit-text-stroke:0.28px #fff;letter-spacing:0.304px;">March 2025</div>
<div class="t" style="left:1623.72px;top:476.20px;font-size:32.60px;line-height:32.60px;color:#fff;font-weight:700;letter-spacing:-0.889px;">$1,667.78</div>
<div class="b" style="left:529.20px;top:1191.60px;width:1041.00px;height:152.60px;background:#fff;border:2px solid #dadada;border-radius:16px;box-sizing:border-box;box-shadow:0 1px 2px rgba(0,0,0,0.04);"></div>
<div class="t" style="left:625.50px;top:1229.87px;font-size:30.51px;line-height:30.51px;color:#222;-webkit-text-stroke:0.28px #222;letter-spacing:-0.299px;">Pending Review</div>
<div class="t" style="left:562.42px;top:1282.53px;font-size:26.54px;line-height:26.54px;color:#c43c64;-webkit-text-stroke:0.28px #c43c64;letter-spacing:-0.026px;">You have 6 expenses pending review.</div>
<div class="b" style="left:1608.10px;top:1191.60px;width:1039.70px;height:152.60px;background:#fff;border:2px solid #dadada;border-radius:16px;box-sizing:border-box;box-shadow:0 1px 2px rgba(0,0,0,0.04);"></div>
<div class="t" style="left:1694.50px;top:1229.87px;font-size:30.51px;line-height:30.51px;color:#222;-webkit-text-stroke:0.28px #222;letter-spacing:-0.025px;">Processing Queue</div>
<div class="t" style="left:1641.42px;top:1282.53px;font-size:26.54px;line-height:26.54px;color:#c43c64;-webkit-text-stroke:0.28px #c43c64;letter-spacing:0.130px;">You have 6 files waiting to be processed.</div>
<div class="b" style="left:2686.40px;top:1190.80px;width:1040.40px;height:154.20px;background:#fff;border:2px solid #dadada;border-radius:16px;box-sizing:border-box;box-shadow:0 1px 2px rgba(0,0,0,0.04);"></div>
<div class="t" style="left:2766.25px;top:1230.17px;font-size:30.51px;line-height:30.51px;color:#222;-webkit-text-stroke:0.28px #222;letter-spacing:0.024px;">Uploaded Files</div>
<div class="t" style="left:2717.32px;top:1283.53px;font-size:26.54px;line-height:26.54px;color:#3aaaa5;-webkit-text-stroke:0.28px #3aaaa5;letter-spacing:0.328px;">No uploaded files waiting to be queued.</div>
<div class="b" style="left:529.00px;top:1383.30px;width:1580.40px;height:697.70px;background:#fff;border:2px solid #dadada;border-radius:16px;box-sizing:border-box;box-shadow:0 1px 2px rgba(0,0,0,0.04);"></div>
<div class="t" style="left:642.01px;top:1438.08px;font-size:30.62px;line-height:30.62px;color:#222;-webkit-text-stroke:0.28px #222;letter-spacing:0.061px;">Spending by Category</div>
<div class="b" style="left:577.00px;top:1510.30px;width:1483.50px;height:569.70px;background:#fff;border:2px solid #e3e3e3;border-radius:13px;box-sizing:border-box;"></div>
<div class="b" style="left:579.00px;top:1564.80px;width:1479.50px;height:1.80px;background:#e3e3e3;"></div>
<div class="b" style="left:1060.10px;top:1523.70px;width:1.80px;height:30.50px;background:#e0e0e0;"></div>
<div class="b" style="left:1526.80px;top:1523.70px;width:1.80px;height:30.50px;background:#e0e0e0;"></div>
<div class="b" style="left:1749.20px;top:1523.70px;width:1.80px;height:30.50px;background:#e0e0e0;"></div>
<div class="b" style="left:2008.10px;top:1523.70px;width:1.80px;height:30.50px;background:#e0e0e0;"></div>
<div class="t" style="left:613.53px;top:1529.24px;font-size:22.99px;line-height:22.99px;color:#2b2b2b;-webkit-text-stroke:0.28px #2b2b2b;letter-spacing:0.375px;">Category</div>
<div class="t" style="left:1080.81px;top:1529.24px;font-size:22.99px;line-height:22.99px;color:#2b2b2b;-webkit-text-stroke:0.28px #2b2b2b;letter-spacing:0.147px;">Business</div>
<div class="t" style="left:1627.21px;top:1529.24px;font-size:22.99px;line-height:22.99px;color:#2b2b2b;-webkit-text-stroke:0.28px #2b2b2b;letter-spacing:0.036px;">Expenses</div>
<div class="t" style="left:1906.74px;top:1529.24px;font-size:22.99px;line-height:22.99px;color:#2b2b2b;font-weight:700;letter-spacing:-0.382px;">Total</div>
<div class="b" style="left:2029.40px;top:1566.60px;width:29.10px;height:513.40px;background:#fafafa;border-left:1.6px solid #e4e4e4;box-sizing:border-box;"></div>
<div class="b" style="left:2038.50px;top:1572.80px;width:15.10px;height:197.20px;background:#c1c1c1;border-radius:7.7px;"></div>
<div class="t" style="left:609.75px;top:1588.81px;font-size:26.33px;line-height:26.33px;color:#2a2a2a;-webkit-text-stroke:0.28px #2a2a2a;letter-spacing:0.443px;">Office Furniture</div>
<div class="t" style="left:1076.84px;top:1588.81px;font-size:26.33px;line-height:26.33px;color:#2a2a2a;-webkit-text-stroke:0.28px #2a2a2a;letter-spacing:0.313px;">Miller &amp; Co. Bookkeeping</div>
<div class="t" style="left:1718.18px;top:1588.81px;font-size:26.33px;line-height:26.33px;color:#2a2a2a;-webkit-text-stroke:0.28px #2a2a2a;">2</div>
<div class="t" style="left:1885.62px;top:1588.81px;font-size:26.33px;line-height:26.33px;color:#2a2a2a;-webkit-text-stroke:0.28px #2a2a2a;letter-spacing:-0.703px;">$1,759.18</div>
<div class="b" style="left:597.60px;top:1625.30px;width:1412.10px;height:47.60px;background:#f4f5f5;border-radius:9px;"></div>
<div class="t" style="left:608.57px;top:1636.81px;font-size:26.33px;line-height:26.33px;color:#2a2a2a;-webkit-text-stroke:0.28px #2a2a2a;letter-spacing:0.364px;">Internet &amp; Phone</div>
<div class="t" style="left:1076.84px;top:1636.81px;font-size:26.33px;line-height:26.33px;color:#2a2a2a;-webkit-text-stroke:0.28px #2a2a2a;letter-spacing:0.313px;">Miller &amp; Co. Bookkeeping</div>
<div class="t" style="left:1718.14px;top:1636.81px;font-size:26.33px;line-height:26.33px;color:#2a2a2a;-webkit-text-stroke:0.28px #2a2a2a;">1</div>
<div class="t" style="left:1901.52px;top:1636.81px;font-size:26.33px;line-height:26.33px;color:#2a2a2a;-webkit-text-stroke:0.28px #2a2a2a;letter-spacing:0.053px;">$977.50</div>
<div class="t" style="left:608.84px;top:1684.81px;font-size:26.33px;line-height:26.33px;color:#2a2a2a;-webkit-text-stroke:0.28px #2a2a2a;letter-spacing:0.178px;">Professional Liability Insurance</div>
<div class="t" style="left:1076.84px;top:1684.81px;font-size:26.33px;line-height:26.33px;color:#2a2a2a;-webkit-text-stroke:0.28px #2a2a2a;letter-spacing:0.313px;">Miller &amp; Co. Bookkeeping</div>
<div class="t" style="left:1718.14px;top:1684.81px;font-size:26.33px;line-height:26.33px;color:#2a2a2a;-webkit-text-stroke:0.28px #2a2a2a;">1</div>
<div class="t" style="left:1896.62px;top:1684.81px;font-size:26.33px;line-height:26.33px;color:#2a2a2a;-webkit-text-stroke:0.28px #2a2a2a;letter-spacing:0.883px;">$803.85</div>
<div class="b" style="left:597.60px;top:1721.30px;width:1412.10px;height:47.60px;background:#f4f5f5;border-radius:9px;"></div>
<div class="t" style="left:610.41px;top:1732.81px;font-size:26.33px;line-height:26.33px;color:#2a2a2a;-webkit-text-stroke:0.28px #2a2a2a;letter-spacing:-0.263px;">Travel Expenses</div>
<div class="t" style="left:1076.84px;top:1732.81px;font-size:26.33px;line-height:26.33px;color:#2a2a2a;-webkit-text-stroke:0.28px #2a2a2a;letter-spacing:0.313px;">Miller &amp; Co. Bookkeeping</div>
<div class="t" style="left:1718.18px;top:1732.81px;font-size:26.33px;line-height:26.33px;color:#2a2a2a;-webkit-text-stroke:0.28px #2a2a2a;">2</div>
<div class="t" style="left:1902.52px;top:1732.81px;font-size:26.33px;line-height:26.33px;color:#2a2a2a;-webkit-text-stroke:0.28px #2a2a2a;letter-spacing:-0.113px;">$701.50</div>
<div class="t" style="left:610.41px;top:1780.81px;font-size:26.33px;line-height:26.33px;color:#2a2a2a;-webkit-text-stroke:0.28px #2a2a2a;letter-spacing:0.296px;">Training &amp; Certifications</div>
<div class="t" style="left:1076.84px;top:1780.81px;font-size:26.33px;line-height:26.33px;color:#2a2a2a;-webkit-text-stroke:0.28px #2a2a2a;letter-spacing:0.313px;">Miller &amp; Co. Bookkeeping</div>
<div class="t" style="left:1718.14px;top:1780.81px;font-size:26.33px;line-height:26.33px;color:#2a2a2a;-webkit-text-stroke:0.28px #2a2a2a;">1</div>
<div class="t" style="left:1897.72px;top:1780.81px;font-size:26.33px;line-height:26.33px;color:#2a2a2a;-webkit-text-stroke:0.28px #2a2a2a;letter-spacing:0.700px;">$488.75</div>
<div class="b" style="left:597.60px;top:1817.30px;width:1412.10px;height:47.60px;background:#f4f5f5;border-radius:9px;"></div>
<div class="t" style="left:609.66px;top:1828.81px;font-size:26.33px;line-height:26.33px;color:#2a2a2a;-webkit-text-stroke:0.28px #2a2a2a;letter-spacing:0.256px;">Charitable Donations</div>
<div class="t" style="left:1076.84px;top:1828.81px;font-size:26.33px;line-height:26.33px;color:#2a2a2a;-webkit-text-stroke:0.28px #2a2a2a;letter-spacing:0.313px;">Miller &amp; Co. Bookkeeping</div>
<div class="t" style="left:1718.14px;top:1828.81px;font-size:26.33px;line-height:26.33px;color:#2a2a2a;-webkit-text-stroke:0.28px #2a2a2a;">1</div>
<div class="t" style="left:1897.72px;top:1828.81px;font-size:26.33px;line-height:26.33px;color:#2a2a2a;-webkit-text-stroke:0.28px #2a2a2a;letter-spacing:0.700px;">$488.75</div>
<div class="t" style="left:609.66px;top:1876.81px;font-size:26.33px;line-height:26.33px;color:#2a2a2a;-webkit-text-stroke:0.28px #2a2a2a;letter-spacing:0.254px;">Coffee &amp; Refreshments</div>
<div class="t" style="left:1076.84px;top:1876.81px;font-size:26.33px;line-height:26.33px;color:#2a2a2a;-webkit-text-stroke:0.28px #2a2a2a;letter-spacing:0.313px;">Miller &amp; Co. Bookkeeping</div>
<div class="t" style="left:1718.14px;top:1876.81px;font-size:26.33px;line-height:26.33px;color:#2a2a2a;-webkit-text-stroke:0.28px #2a2a2a;">1</div>
<div class="t" style="left:1897.72px;top:1876.81px;font-size:26.33px;line-height:26.33px;color:#2a2a2a;-webkit-text-stroke:0.28px #2a2a2a;letter-spacing:0.700px;">$488.75</div>
<div class="b" style="left:597.60px;top:1913.30px;width:1412.10px;height:47.60px;background:#f4f5f5;border-radius:9px;"></div>
<div class="t" style="left:609.75px;top:1924.81px;font-size:26.33px;line-height:26.33px;color:#2a2a2a;-webkit-text-stroke:0.28px #2a2a2a;letter-spacing:0.192px;">Office Rent</div>
<div class="t" style="left:1076.84px;top:1924.81px;font-size:26.33px;line-height:26.33px;color:#2a2a2a;-webkit-text-stroke:0.28px #2a2a2a;letter-spacing:0.313px;">Miller &amp; Co. Bookkeeping</div>
<div class="t" style="left:1718.14px;top:1924.81px;font-size:26.33px;line-height:26.33px;color:#2a2a2a;-webkit-text-stroke:0.28px #2a2a2a;">1</div>
<div class="t" style="left:1896.02px;top:1924.81px;font-size:26.33px;line-height:26.33px;color:#2a2a2a;-webkit-text-stroke:0.28px #2a2a2a;letter-spacing:0.989px;">$462.88</div>
<div class="t" style="left:608.84px;top:1972.81px;font-size:26.33px;line-height:26.33px;color:#2a2a2a;-webkit-text-stroke:0.28px #2a2a2a;letter-spacing:0.306px;">Equipment Maintenance</div>
<div class="t" style="left:1076.84px;top:1972.81px;font-size:26.33px;line-height:26.33px;color:#2a2a2a;-webkit-text-stroke:0.28px #2a2a2a;letter-spacing:0.313px;">Miller &amp; Co. Bookkeeping</div>
<div class="t" style="left:1718.14px;top:1972.81px;font-size:26.33px;line-height:26.33px;color:#2a2a2a;-webkit-text-stroke:0.28px #2a2a2a;">1</div>
<div class="t" style="left:1896.62px;top:1972.81px;font-size:26.33px;line-height:26.33px;color:#2a2a2a;-webkit-text-stroke:0.28px #2a2a2a;letter-spacing:0.870px;">$368.60</div>
<div class="b" style="left:597.60px;top:2009.30px;width:1412.10px;height:47.60px;background:#f4f5f5;border-radius:9px;"></div>
<div class="t" style="left:609.66px;top:2020.81px;font-size:26.33px;line-height:26.33px;color:#2a2a2a;-webkit-text-stroke:0.28px #2a2a2a;letter-spacing:0.157px;">Consulting Fees</div>
<div class="t" style="left:1076.84px;top:2020.81px;font-size:26.33px;line-height:26.33px;color:#2a2a2a;-webkit-text-stroke:0.28px #2a2a2a;letter-spacing:0.313px;">Miller &amp; Co. Bookkeeping</div>
<div class="t" style="left:1718.14px;top:2020.81px;font-size:26.33px;line-height:26.33px;color:#2a2a2a;-webkit-text-stroke:0.28px #2a2a2a;">1</div>
<div class="t" style="left:1896.62px;top:2020.81px;font-size:26.33px;line-height:26.33px;color:#2a2a2a;-webkit-text-stroke:0.28px #2a2a2a;letter-spacing:0.883px;">$343.85</div>
<div class="b" style="left:2147.20px;top:1383.30px;width:1580.40px;height:697.70px;background:#fff;border:2px solid #dadada;border-radius:16px;box-sizing:border-box;box-shadow:0 1px 2px rgba(0,0,0,0.04);"></div>
<div class="t" style="left:2251.81px;top:1438.08px;font-size:30.62px;line-height:30.62px;color:#222;-webkit-text-stroke:0.28px #222;">Spending by Vendor</div>
<div class="b" style="left:2195.20px;top:1510.30px;width:1483.50px;height:569.70px;background:#fff;border:2px solid #e3e3e3;border-radius:13px;box-sizing:border-box;"></div>
<div class="b" style="left:2197.20px;top:1564.80px;width:1479.50px;height:1.80px;background:#e3e3e3;"></div>
<div class="b" style="left:2678.30px;top:1523.70px;width:1.80px;height:30.50px;background:#e0e0e0;"></div>
<div class="b" style="left:3145.00px;top:1523.70px;width:1.80px;height:30.50px;background:#e0e0e0;"></div>
<div class="b" style="left:3367.40px;top:1523.70px;width:1.80px;height:30.50px;background:#e0e0e0;"></div>
<div class="b" style="left:3626.30px;top:1523.70px;width:1.80px;height:30.50px;background:#e0e0e0;"></div>
<div class="t" style="left:2232.80px;top:1529.24px;font-size:22.99px;line-height:22.99px;color:#2b2b2b;-webkit-text-stroke:0.28px #2b2b2b;letter-spacing:-0.050px;">Vendor</div>
<div class="t" style="left:2699.01px;top:1529.24px;font-size:22.99px;line-height:22.99px;color:#2b2b2b;-webkit-text-stroke:0.28px #2b2b2b;letter-spacing:0.147px;">Business</div>
<div class="t" style="left:3245.41px;top:1529.24px;font-size:22.99px;line-height:22.99px;color:#2b2b2b;-webkit-text-stroke:0.28px #2b2b2b;letter-spacing:0.036px;">Expenses</div>
<div class="t" style="left:3524.94px;top:1529.24px;font-size:22.99px;line-height:22.99px;color:#2b2b2b;font-weight:700;letter-spacing:-0.382px;">Total</div>
<div class="b" style="left:3647.60px;top:1566.60px;width:29.10px;height:513.40px;background:#fafafa;border-left:1.6px solid #e4e4e4;box-sizing:border-box;"></div>
<div class="b" style="left:3656.70px;top:1572.80px;width:15.10px;height:237.60px;background:#c1c1c1;border-radius:7.7px;"></div>
<div class="t" style="left:2228.61px;top:1588.81px;font-size:26.33px;line-height:26.33px;color:#2a2a2a;-webkit-text-stroke:0.28px #2a2a2a;letter-spacing:-0.382px;">TurboTax Business</div>
<div class="t" style="left:2695.04px;top:1588.81px;font-size:26.33px;line-height:26.33px;color:#2a2a2a;-webkit-text-stroke:0.28px #2a2a2a;letter-spacing:0.313px;">Miller &amp; Co. Bookkeeping</div>
<div class="t" style="left:3336.38px;top:1588.81px;font-size:26.33px;line-height:26.33px;color:#2a2a2a;-webkit-text-stroke:0.28px #2a2a2a;">2</div>
<div class="t" style="left:3502.82px;top:1588.81px;font-size:26.33px;line-height:26.33px;color:#2a2a2a;-webkit-text-stroke:0.28px #2a2a2a;letter-spacing:-0.583px;">$1,321.35</div>
<div class="b" style="left:2215.80px;top:1625.30px;width:1412.10px;height:47.60px;background:#f4f5f5;border-radius:9px;"></div>
<div class="t" style="left:2228.00px;top:1635.81px;font-size:26.33px;line-height:26.33px;color:#2a2a2a;-webkit-text-stroke:0.28px #2a2a2a;letter-spacing:0.012px;">Square Business Services</div>
<div class="t" style="left:2695.04px;top:1636.81px;font-size:26.33px;line-height:26.33px;color:#2a2a2a;-webkit-text-stroke:0.28px #2a2a2a;letter-spacing:0.313px;">Miller &amp; Co. Bookkeeping</div>
<div class="t" style="left:3336.38px;top:1636.81px;font-size:26.33px;line-height:26.33px;color:#2a2a2a;-webkit-text-stroke:0.28px #2a2a2a;">2</div>
<div class="t" style="left:3501.72px;top:1636.81px;font-size:26.33px;line-height:26.33px;color:#2a2a2a;-webkit-text-stroke:0.28px #2a2a2a;letter-spacing:-0.455px;">$1,016.60</div>
<div class="t" style="left:2227.04px;top:1684.81px;font-size:26.33px;line-height:26.33px;color:#2a2a2a;-webkit-text-stroke:0.28px #2a2a2a;letter-spacing:0.248px;">Dell Business Computing</div>
<div class="t" style="left:2695.04px;top:1684.81px;font-size:26.33px;line-height:26.33px;color:#2a2a2a;-webkit-text-stroke:0.28px #2a2a2a;letter-spacing:0.313px;">Miller &amp; Co. Bookkeeping</div>
<div class="t" style="left:3336.38px;top:1684.81px;font-size:26.33px;line-height:26.33px;color:#2a2a2a;-webkit-text-stroke:0.28px #2a2a2a;">2</div>
<div class="t" style="left:3514.82px;top:1684.81px;font-size:26.33px;line-height:26.33px;color:#2a2a2a;-webkit-text-stroke:0.28px #2a2a2a;letter-spacing:0.870px;">$993.60</div>
<div class="b" style="left:2215.80px;top:1721.30px;width:1412.10px;height:47.60px;background:#f4f5f5;border-radius:9px;"></div>
<div class="t" style="left:2228.00px;top:1732.81px;font-size:26.33px;line-height:26.33px;color:#2a2a2a;-webkit-text-stroke:0.28px #2a2a2a;letter-spacing:-0.018px;">State Farm Business Insurance</div>
<div class="t" style="left:2695.04px;top:1732.81px;font-size:26.33px;line-height:26.33px;color:#2a2a2a;-webkit-text-stroke:0.28px #2a2a2a;letter-spacing:0.313px;">Miller &amp; Co. Bookkeeping</div>
<div class="t" style="left:3336.34px;top:1732.81px;font-size:26.33px;line-height:26.33px;color:#2a2a2a;-webkit-text-stroke:0.28px #2a2a2a;">1</div>
<div class="t" style="left:3515.92px;top:1732.81px;font-size:26.33px;line-height:26.33px;color:#2a2a2a;-webkit-text-stroke:0.28px #2a2a2a;letter-spacing:0.708px;">$955.33</div>
<div class="t" style="left:2228.00px;top:1780.81px;font-size:26.33px;line-height:26.33px;color:#2a2a2a;-webkit-text-stroke:0.28px #2a2a2a;letter-spacing:0.094px;">Slack Technologies</div>
<div class="t" style="left:2695.04px;top:1780.81px;font-size:26.33px;line-height:26.33px;color:#2a2a2a;-webkit-text-stroke:0.28px #2a2a2a;letter-spacing:0.313px;">Miller &amp; Co. Bookkeeping</div>
<div class="t" style="left:3336.38px;top:1780.81px;font-size:26.33px;line-height:26.33px;color:#2a2a2a;-webkit-text-stroke:0.28px #2a2a2a;">2</div>
<div class="t" style="left:3515.92px;top:1780.81px;font-size:26.33px;line-height:26.33px;color:#2a2a2a;-webkit-text-stroke:0.28px #2a2a2a;letter-spacing:0.700px;">$558.35</div>
<div class="b" style="left:2215.80px;top:1817.30px;width:1412.10px;height:47.60px;background:#f4f5f5;border-radius:9px;"></div>
<div class="t" style="left:2227.04px;top:1828.81px;font-size:26.33px;line-height:26.33px;color:#2a2a2a;-webkit-text-stroke:0.28px #2a2a2a;letter-spacing:0.034px;">LinkedIn Premium Business</div>
<div class="t" style="left:2695.04px;top:1828.81px;font-size:26.33px;line-height:26.33px;color:#2a2a2a;-webkit-text-stroke:0.28px #2a2a2a;letter-spacing:0.313px;">Miller &amp; Co. Bookkeeping</div>
<div class="t" style="left:3336.34px;top:1828.81px;font-size:26.33px;line-height:26.33px;color:#2a2a2a;-webkit-text-stroke:0.28px #2a2a2a;">1</div>
<div class="t" style="left:3515.92px;top:1828.81px;font-size:26.33px;line-height:26.33px;color:#2a2a2a;-webkit-text-stroke:0.28px #2a2a2a;letter-spacing:0.700px;">$488.75</div>
<div class="t" style="left:2229.08px;top:1876.81px;font-size:26.33px;line-height:26.33px;color:#2a2a2a;-webkit-text-stroke:0.28px #2a2a2a;letter-spacing:-0.062px;">Wave Financial Software</div>
<div class="t" style="left:2695.04px;top:1876.81px;font-size:26.33px;line-height:26.33px;color:#2a2a2a;-webkit-text-stroke:0.28px #2a2a2a;letter-spacing:0.313px;">Miller &amp; Co. Bookkeeping</div>
<div class="t" style="left:3336.34px;top:1876.81px;font-size:26.33px;line-height:26.33px;color:#2a2a2a;-webkit-text-stroke:0.28px #2a2a2a;">1</div>
<div class="t" style="left:3515.92px;top:1876.81px;font-size:26.33px;line-height:26.33px;color:#2a2a2a;-webkit-text-stroke:0.28px #2a2a2a;letter-spacing:0.700px;">$488.75</div>
<div class="b" style="left:2215.80px;top:1913.30px;width:1412.10px;height:47.60px;background:#f4f5f5;border-radius:9px;"></div>
<div class="t" style="left:2229.15px;top:1924.81px;font-size:26.33px;line-height:26.33px;color:#2a2a2a;-webkit-text-stroke:0.28px #2a2a2a;letter-spacing:-0.222px;">AT&amp;T Business Services</div>
<div class="t" style="left:2695.04px;top:1924.81px;font-size:26.33px;line-height:26.33px;color:#2a2a2a;-webkit-text-stroke:0.28px #2a2a2a;letter-spacing:0.313px;">Miller &amp; Co. Bookkeeping</div>
<div class="t" style="left:3336.34px;top:1924.81px;font-size:26.33px;line-height:26.33px;color:#2a2a2a;-webkit-text-stroke:0.28px #2a2a2a;">1</div>
<div class="t" style="left:3515.92px;top:1924.81px;font-size:26.33px;line-height:26.33px;color:#2a2a2a;-webkit-text-stroke:0.28px #2a2a2a;letter-spacing:0.700px;">$488.75</div>
<div class="t" style="left:2227.86px;top:1972.81px;font-size:26.33px;line-height:26.33px;color:#2a2a2a;-webkit-text-stroke:0.28px #2a2a2a;letter-spacing:-0.194px;">Canva Pro Business</div>
<div class="t" style="left:2695.04px;top:1972.81px;font-size:26.33px;line-height:26.33px;color:#2a2a2a;-webkit-text-stroke:0.28px #2a2a2a;letter-spacing:0.313px;">Miller &amp; Co. Bookkeeping</div>
<div class="t" style="left:3336.34px;top:1972.81px;font-size:26.33px;line-height:26.33px;color:#2a2a2a;-webkit-text-stroke:0.28px #2a2a2a;">1</div>
<div class="t" style="left:3515.92px;top:1972.81px;font-size:26.33px;line-height:26.33px;color:#2a2a2a;-webkit-text-stroke:0.28px #2a2a2a;letter-spacing:0.700px;">$488.75</div>
<div class="b" style="left:2215.80px;top:2009.30px;width:1412.10px;height:47.60px;background:#f4f5f5;border-radius:9px;"></div>
<div class="t" style="left:2227.04px;top:2020.81px;font-size:26.33px;line-height:26.33px;color:#2a2a2a;-webkit-text-stroke:0.28px #2a2a2a;letter-spacing:-0.069px;">PayPal Business Account</div>
<div class="t" style="left:2695.04px;top:2020.81px;font-size:26.33px;line-height:26.33px;color:#2a2a2a;-webkit-text-stroke:0.28px #2a2a2a;letter-spacing:0.313px;">Miller &amp; Co. Bookkeeping</div>
<div class="t" style="left:3336.34px;top:2020.81px;font-size:26.33px;line-height:26.33px;color:#2a2a2a;-webkit-text-stroke:0.28px #2a2a2a;">1</div>
<div class="t" style="left:3514.22px;top:2020.81px;font-size:26.33px;line-height:26.33px;color:#2a2a2a;-webkit-text-stroke:0.28px #2a2a2a;letter-spacing:0.989px;">$462.88</div>
<svg class="ov" width="3804" height="2054" viewBox="0 0 3804 2054" xmlns="http://www.w3.org/2000/svg"><g transform="translate(565.20 1230.50) scale(1.3100)" fill="none" stroke="#2a7fbd" stroke-linecap="round" stroke-linejoin="round" ><path d="M1 10.95 Q8.5 1 17.35 1 Q26.2 1 33.7 10.95 Q26.2 20.9 17.35 20.9 Q8.5 20.9 1 10.95 Z" stroke-width="2"/><circle cx="17.35" cy="10.95" r="7" fill="#2a7fbd" stroke="none"/><circle cx="17.35" cy="10.95" r="2.5" fill="#fff" stroke="none"/></g><path d="M1507.4 1239.3 H1535.5 M1523.9 1228.1 L1535.5 1239.3 L1523.9 1250.5" fill="none" stroke="#8e8e8e" stroke-width="2.6" stroke-linecap="round" stroke-linejoin="round"/><g transform="translate(1645.36 1233.10) scale(1.3100)" fill="none" stroke="#2a7fbd" stroke-linecap="round" stroke-linejoin="round" ><circle cx="1.3" cy="1.3" r="1.55" fill="#2a7fbd" stroke="none"/><path d="M6.6 1.3 H24.3" stroke-width="1.9"/><circle cx="1.3" cy="9.05" r="1.55" fill="#2a7fbd" stroke="none"/><path d="M6.6 9.05 H24.3" stroke-width="1.9"/><circle cx="1.3" cy="16.8" r="1.55" fill="#2a7fbd" stroke="none"/><path d="M6.6 16.8 H24.3" stroke-width="1.9"/></g><path d="M2586.3 1239.3 H2614.4 M2602.8 1228.1 L2614.4 1239.3 L2602.8 1250.5" fill="none" stroke="#8e8e8e" stroke-width="2.6" stroke-linecap="round" stroke-linejoin="round"/><g transform="translate(0 0)" fill="none" stroke="#2a7fbd" stroke-linecap="round" stroke-linejoin="round"><path d="M2728.5 1227.8 H2737 Q2738.6 1227.8 2739.7 1228.9 L2748.2 1237.6 Q2749.4 1238.8 2749.4 1240.6 V1256.4 Q2749.4 1260.4 2745.4 1260.4 H2728.5 Q2724.5 1260.4 2724.5 1256.4 V1231.8 Q2724.5 1227.8 2728.5 1227.8 Z" stroke-width="2.8"/><path d="M2737 1228.2 V1237.6 Q2737 1240.2 2739.6 1240.2 H2749" stroke-width="2.6"/><path d="M2737 1245 V1256.3 M2731.7 1249.9 L2737 1244.9 L2742.3 1249.9" stroke-width="2.4"/></g><g transform="translate(0 0)" fill="none" stroke="#2a7fbd" stroke-linecap="round" stroke-linejoin="round"><path d="M585.5 1443.3 L608.6 1436.3 Q612.6 1435.3 612.6 1439.6 V1443" stroke-width="2.6"/><rect x="583.6" y="1443.4" width="33.7" height="24" rx="4" stroke-width="2.6"/><rect x="608" y="1451.4" width="12.4" height="7.8" rx="3.3" stroke-width="2.6" fill="#fff"/><circle cx="612.2" cy="1455.4" r="1.6" fill="#2a7fbd" stroke="none"/></g><path d="M1980.9 1536.3 L1986.9 1542.8999999999999 L1992.9 1536.3" fill="none" stroke="#6a6a6a" stroke-width="1.8" stroke-linecap="round" stroke-linejoin="round"/><g transform="translate(0 0)" fill="none" stroke="#2a7fbd" stroke-linecap="round" stroke-linejoin="round"><path d="M2205.37 1465.69 A15.3 15.3 0 1 1 2230.91 1452.11" stroke-width="2.8"/><circle cx="2231.3" cy="1456.6" r="1.55" fill="#2a7fbd" stroke="none"/><circle cx="2229.7" cy="1461.4" r="1.55" fill="#2a7fbd" stroke="none"/><circle cx="2226.7" cy="1465.3" r="1.55" fill="#2a7fbd" stroke="none"/><path d="M2208.1 1446.4 L2218.6 1453.2 A2.9 2.9 0 1 1 2214.3 1457.4 Z" fill="#2a7fbd" stroke="#2a7fbd" stroke-width="0.6"/></g><path d="M3599.1000000000004 1536.3 L3605.1000000000004 1542.8999999999999 L3611.1000000000004 1536.3" fill="none" stroke="#6a6a6a" stroke-width="1.8" stroke-linecap="round" stroke-linejoin="round"/></svg>
<div class="b" style="left:3775.00px;top:106.00px;width:29.00px;height:1948.00px;background:#fafafa;border-left:1.5px solid #e6e6e6;box-sizing:border-box;"></div>
<div class="b" style="left:3782.00px;top:110.00px;width:16.00px;height:1246.00px;background:#c1c1c1;border-radius:8px;"></div></div></body></html>
